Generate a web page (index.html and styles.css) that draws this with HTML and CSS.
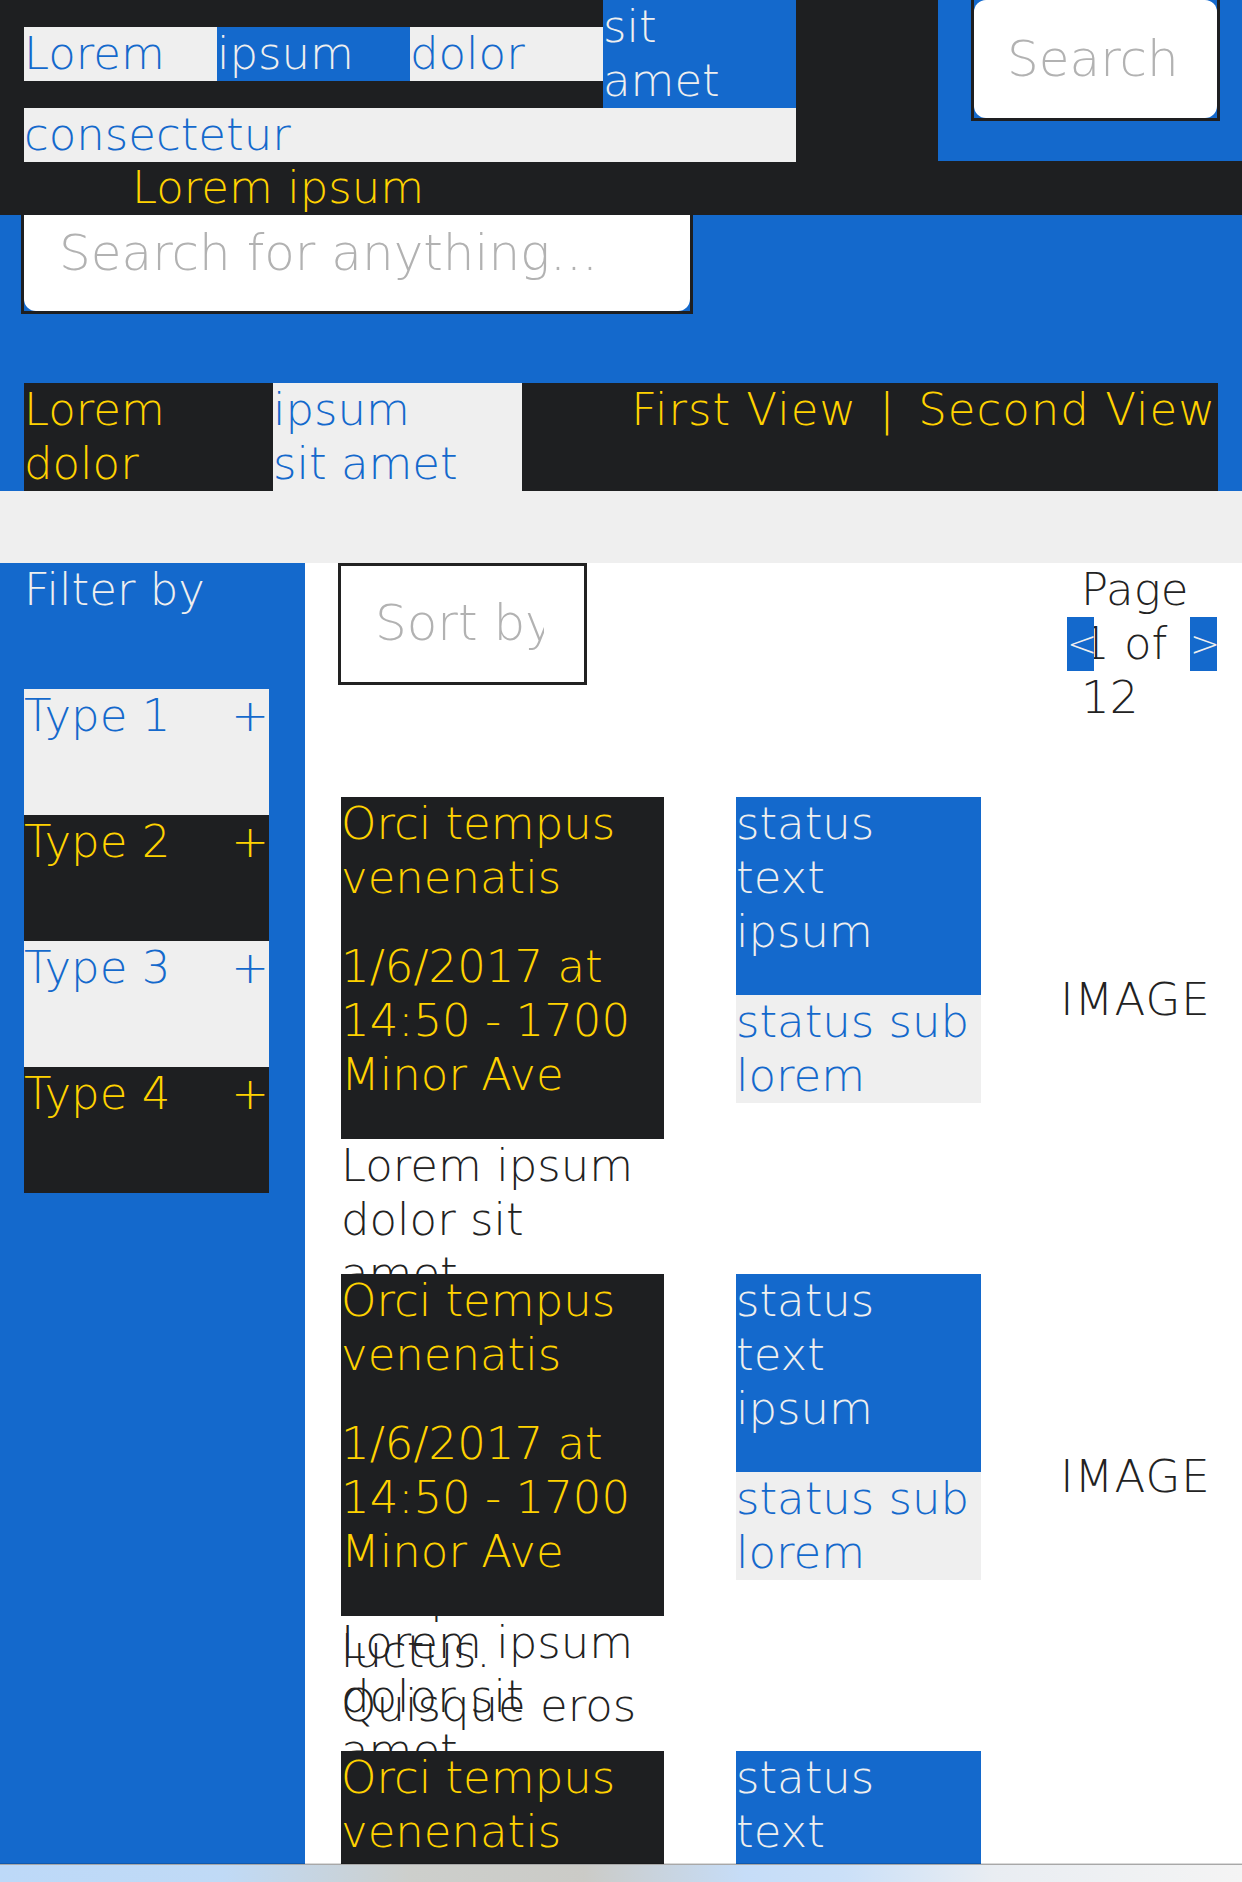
FILE: index.html
```html
<!DOCTYPE html>
<html lang="en">
<head>
<meta charset="utf-8">
<title>Listing</title>
<link rel="stylesheet" href="styles.css">
</head>
<body>
<header class="top">
  <div class="top-left">
    <ul class="nav">
      <li class="nav-item is-light">Lorem</li>
      <li class="nav-item is-blue">ipsum</li>
      <li class="nav-item is-light">dolor</li>
      <li class="nav-item is-blue">sit amet</li>
      <li class="nav-item is-light is-wide">consectetur</li>
    </ul>
    <div class="brand">Lorem ipsum</div>
  </div>
  <div class="top-right">
    <div class="search-wrap search-wrap--small">
      <input class="search-input search-input--small" type="text" placeholder="Search">
    </div>
  </div>
</header>

<section class="hero">
  <div class="search-wrap search-wrap--big">
    <input class="search-input search-input--big" type="text" placeholder="Search for anything...">
  </div>
  <div class="bar">
    <div class="bar-item is-dark">Lorem dolor</div>
    <div class="bar-item is-light">ipsum sit amet</div>
    <div class="views">First View<span class="sep">|</span>Second View</div>
  </div>
</section>

<div class="band"></div>

<main class="main">
  <aside class="sidebar">
    <div class="filter-title">Filter by</div>
    <ul class="types">
      <li class="type is-light"><span>Type 1</span><span>+</span></li>
      <li class="type is-dark"><span>Type 2</span><span>+</span></li>
      <li class="type is-light"><span>Type 3</span><span>+</span></li>
      <li class="type is-dark"><span>Type 4</span><span>+</span></li>
    </ul>
  </aside>

  <div class="content">
    <div class="toolbar">
      <div class="sort"><span class="sort-text">Sort by</span></div>
      <div class="pager">
        Page 1 of 12
        <span class="pager-btn pager-prev">&lt;</span>
        <span class="pager-btn pager-next">&gt;</span>
      </div>
    </div>

    <ul class="cards">
      <li class="card">
        <div class="card-main">
          <div class="card-head">
            <div class="card-title">Orci tempus venenatis</div>
            <div class="card-date">1/6/2017 at 14:50 - 1700 Minor Ave</div>
          </div>
          <p class="card-desc">Lorem ipsum dolor sit amet, consectetur adipiscing elit. Nunc vitae metus ut justo tempus luctus. Quisque eros</p>
        </div>
        <div class="status">
          <div class="status-main">status text ipsum</div>
          <div class="status-sub">status sub lorem</div>
        </div>
        <div class="image">IMAGE</div>
      </li>
      <li class="card">
        <div class="card-main">
          <div class="card-head">
            <div class="card-title">Orci tempus venenatis</div>
            <div class="card-date">1/6/2017 at 14:50 - 1700 Minor Ave</div>
          </div>
          <p class="card-desc">Lorem ipsum dolor sit amet, consectetur adipiscing elit. Nunc vitae metus ut justo tempus luctus. Quisque eros</p>
        </div>
        <div class="status">
          <div class="status-main">status text ipsum</div>
          <div class="status-sub">status sub lorem</div>
        </div>
        <div class="image">IMAGE</div>
      </li>
      <li class="card">
        <div class="card-main">
          <div class="card-head">
            <div class="card-title">Orci tempus venenatis</div>
            <div class="card-date">1/6/2017 at 14:50 - 1700 Minor Ave</div>
          </div>
          <p class="card-desc">Lorem ipsum dolor sit amet, consectetur adipiscing elit. Nunc vitae metus ut justo tempus luctus. Quisque eros</p>
        </div>
        <div class="status">
          <div class="status-main">status text ipsum</div>
          <div class="status-sub">status sub lorem</div>
        </div>
        <div class="image">IMAGE</div>
      </li>
    </ul>
  </div>
</main>

<div class="toolbar-bottom"></div>
</body>
</html>
```

FILE: styles.css
```css
* { box-sizing: border-box; }

:root {
  --blue: #1469cc;
  --dark: #1e1f21;
  --light: #efefef;
  --yellow: #ffd200;
  --ink: #222222;
}

html, body {
  margin: 0;
  padding: 0;
  background: #ffffff;
}

body {
  font-family: "DejaVu Sans", "Liberation Sans", sans-serif;
  font-weight: 200;
  font-size: 45px;
  line-height: 54px;
  color: var(--ink);
}

ul { list-style: none; margin: 0; padding: 0; }
p { margin: 0; }

/* ---------- header ---------- */
.top {
  display: flex;
  align-items: flex-start;
  background: var(--dark);
  height: 215px;
}

.top-left {
  padding-left: 24px;
}

.nav {
  display: flex;
  flex-wrap: wrap;
  align-items: center;
  width: 772px;
}

.nav-item {
  width: 193px;
  padding-right: 14px;
}

.nav-item.is-light { background: var(--light); color: var(--blue); }
.nav-item.is-blue { background: var(--blue); color: var(--light); }
.nav-item.is-wide { width: 100%; }

.brand {
  color: var(--yellow);
  padding-left: 108px;
  margin-top: -1px;
}

.top-right {
  margin-left: auto;
  width: 304px;
  height: 161px;
  background: var(--blue);
  padding-left: 33px;
}

.search-wrap {
  border: 3px solid var(--dark);
  border-top: 0;
}

.search-wrap--small {
  width: 249px;
}

.search-wrap--big {
  width: 672px;
  margin-left: -3px;
}

.search-input {
  display: block;
  width: 100%;
  border: 0;
  margin: 0;
  outline: none;
  background: #ffffff;
  font-family: "DejaVu Sans", "Liberation Sans", sans-serif;
  font-weight: 200;
  font-size: 50px;
  color: var(--ink);
}

.search-input::placeholder { color: #b2b2b2; opacity: 1; }

.search-input--small {
  height: 118px;
  border-radius: 12px;
  padding: 0 0 0 33px;
}

.search-input--big {
  height: 96px;
  border-radius: 0 0 12px 12px;
  padding: 0 0 20px 35px;
}

/* ---------- hero ---------- */
.hero {
  background: var(--blue);
  padding: 0 24px;
}

.bar {
  display: flex;
  margin-top: 69px;
  background: var(--dark);
  height: 108px;
}

.bar-item {
  width: 249px;
  padding-right: 50px;
}

.bar-item.is-dark { background: var(--dark); color: var(--yellow); }
.bar-item.is-light { background: var(--light); color: var(--blue); }

.views {
  margin-left: auto;
  color: var(--yellow);
  padding-right: 2px;
  white-space: nowrap;
  letter-spacing: 1px;
}

.sep {
  padding: 0 23px 0 22px;
}

.band {
  height: 72px;
  background: var(--light);
}

/* ---------- main ---------- */
.main {
  display: flex;
  align-items: stretch;
}

.sidebar {
  width: 305px;
  flex: none;
  background: var(--blue);
  padding: 0 36px 0 24px;
}

.filter-title {
  color: var(--light);
}

.types {
  margin-top: 72px;
}

.type {
  display: flex;
  justify-content: space-between;
  height: 126px;
}

.type.is-light { background: var(--light); color: var(--blue); }
.type.is-dark { background: var(--dark); color: var(--yellow); }

.content {
  flex: 1;
  padding: 0 24px 0 36px;
  min-width: 0;
}

.toolbar {
  display: flex;
  align-items: flex-start;
  height: 162px;
  margin-bottom: 72px;
}

.sort {
  width: 249px;
  height: 122px;
  margin-left: -3px;
  border: 3px solid var(--ink);
  padding: 28px 40px 0 34px;
  font-size: 50px;
  line-height: 58px;
  color: #b2b2b2;
  overflow: hidden;
}

.sort-text {
  display: block;
  white-space: nowrap;
  overflow: hidden;
}

.pager {
  position: relative;
  margin-left: auto;
  width: 151px;
  padding-left: 14px;
  color: var(--ink);
}

.pager-btn {
  position: absolute;
  top: 54px;
  width: 27px;
  height: 54px;
  background: var(--blue);
  color: var(--light);
  font-size: 36px;
  text-align: center;
  line-height: 54px;
}

.pager-prev { left: 0; }
.pager-next { right: 1px; }

/* ---------- cards ---------- */
.cards {
  display: flex;
  flex-direction: column;
}

.card {
  display: flex;
  align-items: flex-start;
  height: 477px;
  flex: none;
}

.card-main {
  width: 323px;
  flex: none;
}

.card-head {
  background: var(--dark);
  color: var(--yellow);
  padding-bottom: 37px;
}

.card-title {
  margin-bottom: 35px;
}

.card-desc {
  width: 310px;
  color: var(--ink);
}

.status {
  width: 245px;
  flex: none;
  margin-left: 72px;
}

.status-main {
  background: var(--blue);
  color: var(--light);
  padding: 0 8px 36px 0;
}

.status-sub {
  background: var(--light);
  color: var(--blue);
  padding-right: 8px;
}

.image {
  flex: 1;
  margin-left: 72px;
  padding-top: 176px;
  text-align: center;
  color: var(--ink);
  letter-spacing: 1px;
}

/* ---------- browser toolbar strip ---------- */
.toolbar-bottom {
  position: fixed;
  left: 0;
  right: 0;
  bottom: 0;
  height: 18px;
  border-top: 1px solid #a8a8a8;
  box-shadow: 0 -1px 0 rgba(0, 0, 0, 0.15);
  background: linear-gradient(90deg, #bdd9f8 0%, #c0daf6 18%, #cdcfcc 33%, #cbcbc7 47%, #c6ddf8 60%, #cbe0f8 68%, #e9edf2 80%, #f4f4f4 100%);
}
```
